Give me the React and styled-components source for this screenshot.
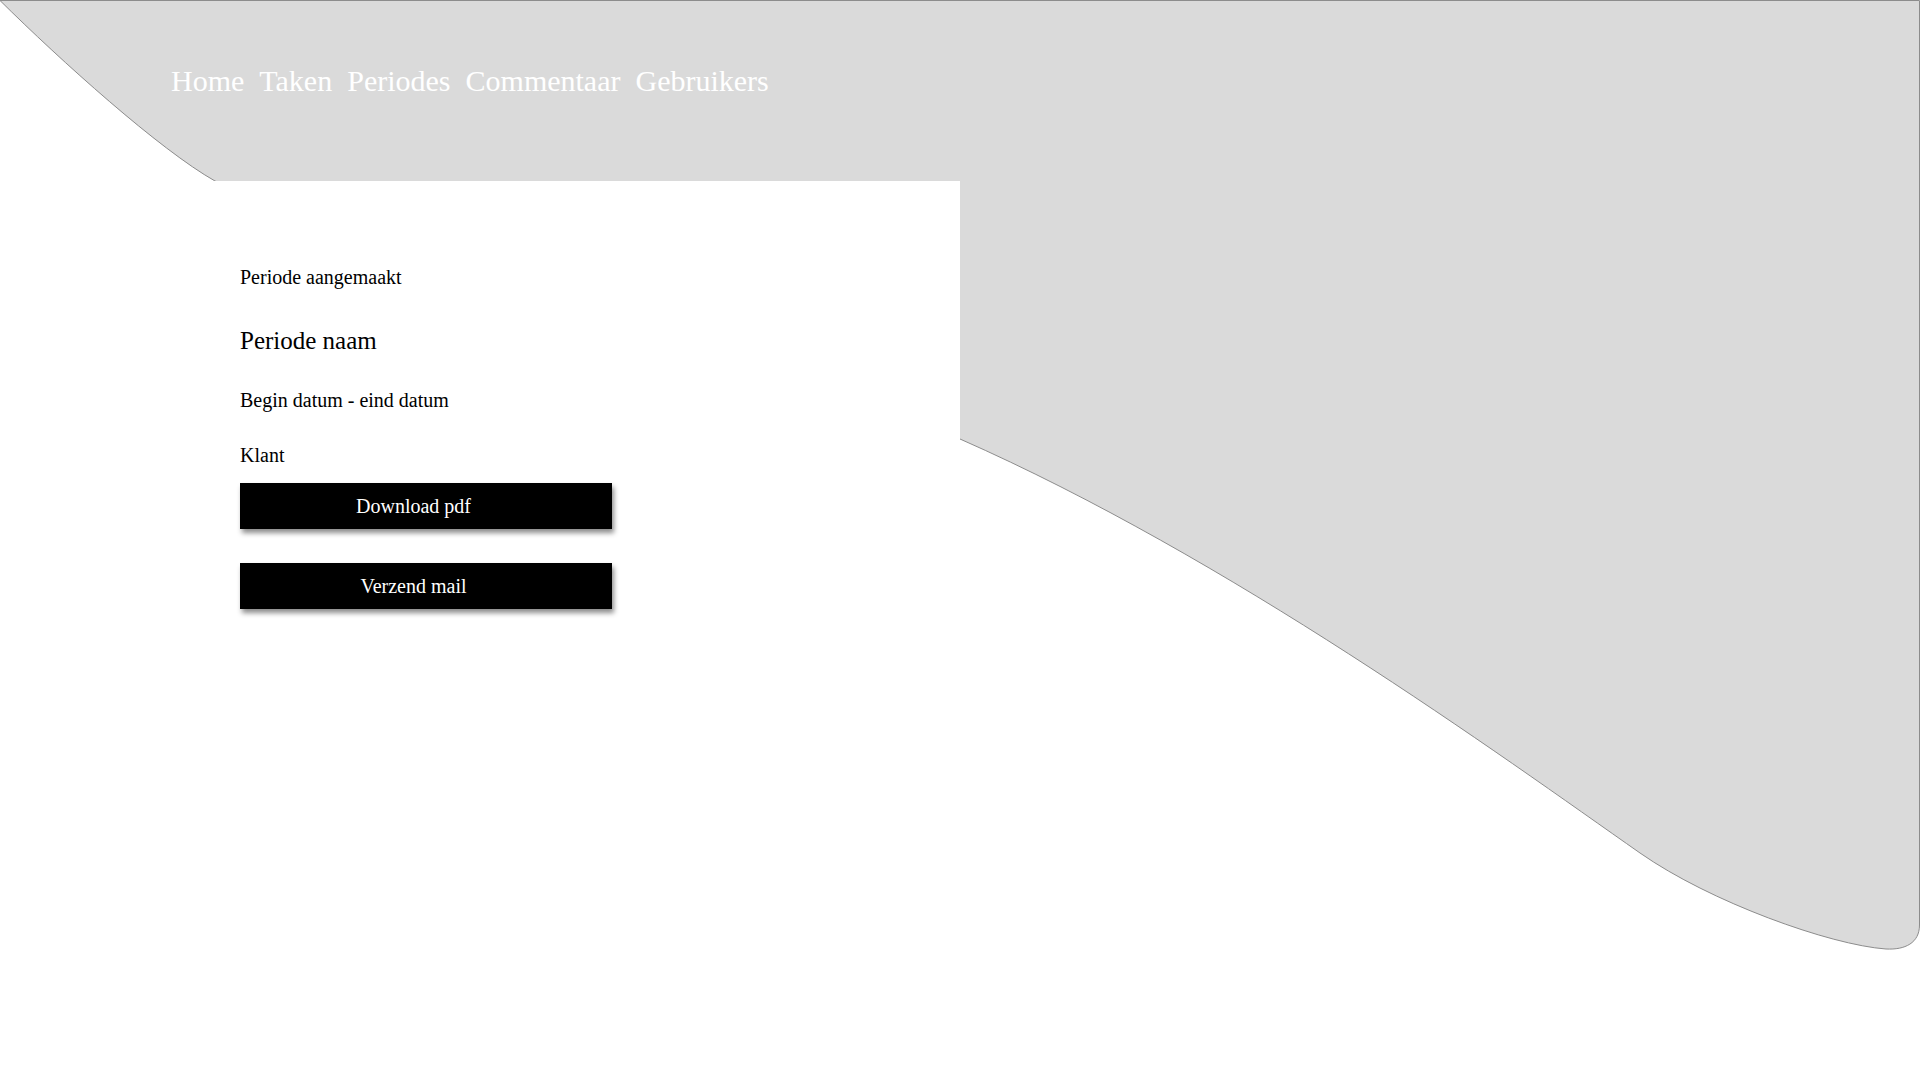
import styled, { createGlobalStyle } from "styled-components";

const GlobalStyle = createGlobalStyle`
  html, body {
    margin: 0;
    padding: 0;
    background: #ffffff;
  }
  body {
    font-family: "Liberation Serif", "Times New Roman", serif;
    color: #000000;
  }
  * {
    box-sizing: border-box;
  }
`;

const navItems = ["Home", "Taken", "Periodes", "Commentaar", "Gebruikers"];

export default function App() {
  return (
    <>
      <GlobalStyle />
      <StyledPage>
        <Backdrop />
        <StyledContent>
          <StyledHeader>
            <StyledNav>
              {navItems.map((item) => (
                <StyledNavLink key={item} href="#">
                  {item}
                </StyledNavLink>
              ))}
            </StyledNav>
          </StyledHeader>
          <StyledCard>
            <StyledMeta>Periode aangemaakt</StyledMeta>
            <StyledTitle>Periode naam</StyledTitle>
            <StyledDetail $top="32px">Begin datum - eind datum</StyledDetail>
            <StyledDetail $top="31px">Klant</StyledDetail>
            <StyledButtonList>
              <StyledButton type="button">Download pdf</StyledButton>
              <StyledButton type="button">Verzend mail</StyledButton>
            </StyledButtonList>
          </StyledCard>
        </StyledContent>
      </StyledPage>
    </>
  );
}

// grey wave shape behind the header and the card
function Backdrop() {
  return (
    <StyledBackdrop viewBox="0 0 1920 1080" preserveAspectRatio="none">
      <path
        d="M 0 0.5
           H 1919.5
           V 925
           C 1919.5 943 1905 950 1886 949
           C 1830 945 1710 902 1640 853
           C 1500 755 1230 558 960 439
           C 700 330 400 260 215 181
           C 160 150 60 60 0 0.5 Z"
        fill="#dadada"
        stroke="#8c8c8c"
        strokeWidth="1"
      />
    </StyledBackdrop>
  );
}

const StyledPage = styled.div`
  position: relative;
  width: 1920px;
  height: 1080px;
  overflow: hidden;
  background: #ffffff;
`;

const StyledBackdrop = styled.svg`
  position: absolute;
  top: 0;
  left: 0;
  width: 1920px;
  height: 1080px;
  z-index: 0;
`;

const StyledContent = styled.div`
  position: relative;
  z-index: 1;
  display: flex;
  flex-direction: column;
`;

const StyledHeader = styled.header`
  height: 181px;
  padding: 66px 0 0 171px;
`;

const StyledNav = styled.nav`
  display: flex;
  flex-direction: row;
  gap: 15px;
`;

const StyledNavLink = styled.a`
  font-size: 30px;
  line-height: 30px;
  color: #ffffff;
  text-decoration: none;
`;

const StyledCard = styled.main`
  display: flex;
  flex-direction: column;
  align-items: flex-start;
  margin-left: 214px;
  width: 746px;
  min-height: 600px;
  padding: 84px 26px 40px 26px;
  background: #ffffff;
`;

const StyledMeta = styled.p`
  margin: 0;
  font-size: 20px;
  line-height: 24px;
`;

const StyledTitle = styled.h2`
  margin: 37px 0 0 0;
  font-size: 25px;
  line-height: 30px;
  font-weight: normal;
`;

const StyledDetail = styled.p`
  margin: ${(props) => props.$top} 0 0 0;
  font-size: 20px;
  line-height: 24px;
`;

const StyledButtonList = styled.div`
  display: flex;
  flex-direction: column;
  gap: 34px;
  margin-top: 16px;
`;

const StyledButton = styled.button`
  width: 372px;
  height: 46px;
  padding: 0 25px 0 0;
  border: none;
  background: #000000;
  color: #ffffff;
  font-family: "Liberation Serif", "Times New Roman", serif;
  font-size: 20px;
  line-height: 46px;
  text-align: center;
  box-shadow: 2px 4px 5px rgba(0, 0, 0, 0.45);
  cursor: pointer;
`;
